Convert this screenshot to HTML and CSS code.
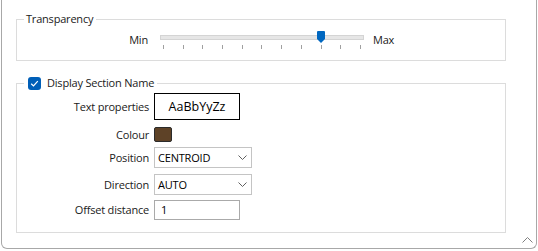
FILE: index.html
```html
<!DOCTYPE html>
<html lang="en">
<head>
    <meta charset="UTF-8">
    <title>Section Name Options</title>
    <link rel="stylesheet" href="styles.css">
</head>
<body>

    <div class="panel">

        <!-- Transparency -->
        <fieldset class="group group-transparency">
            <legend>Transparency</legend>
            <div class="slider-row">
                <span class="slider-label slider-min">Min</span>
                <div class="slider">
                    <div class="track"></div>
                    <svg class="thumb" width="8" height="12" viewBox="0 0 8 12">
                        <path d="M1 0 H7 Q8 0 8 1 V8 L4 12 L0 8 V1 Q0 0 1 0 Z" fill="#0067c0"/>
                    </svg>
                    <div class="ticks">
                        <span></span><span></span><span></span><span></span><span></span><span></span>
                        <span></span><span></span><span></span><span></span><span></span>
                    </div>
                </div>
                <span class="slider-label">Max</span>
            </div>
        </fieldset>

        <!-- Section name -->
        <fieldset class="group group-section">
            <legend>
                <label class="check">
                    <span class="checkbox">
                        <svg width="13" height="13" viewBox="0 0 13 13">
                            <path d="M3.2 6.8 L5.5 9 L9.8 4.2" fill="none" stroke="#fff" stroke-width="1.2"/>
                        </svg>
                    </span>
                    Display Section Name
                </label>
            </legend>
            <div class="form-grid">
                <span class="field-label">Text properties</span>
                <div class="font-box">AaBbYyZz</div>

                <span class="field-label">Colour</span>
                <div class="swatch"></div>

                <span class="field-label">Position</span>
                <div class="select">
                    <span>CENTROID</span>
                    <svg width="9" height="5" viewBox="0 0 9 5"><path d="M0.5 0.5 L4.5 4.5 L8.5 0.5" fill="none" stroke="#606060"/></svg>
                </div>

                <span class="field-label">Direction</span>
                <div class="select">
                    <span>AUTO</span>
                    <svg width="9" height="5" viewBox="0 0 9 5"><path d="M0.5 0.5 L4.5 4.5 L8.5 0.5" fill="none" stroke="#606060"/></svg>
                </div>

                <span class="field-label">Offset distance</span>
                <div class="text-input">1</div>
            </div>
        </fieldset>

        <div class="panel-footer">
            <svg width="11" height="6" viewBox="0 0 11 6"><path d="M0.5 5.5 L5.5 0.5 L10.5 5.5" fill="none" stroke="#808080"/></svg>
        </div>
    </div>

</body>
</html>
```

FILE: styles.css
```css
/* General */
body {
    margin: 0;
    background: #ffffff;
    font-family: 'Open Sans', 'Liberation Sans', sans-serif;
    font-size: 11px;
    letter-spacing: -0.2px;
    color: #1a1a1a;
}

.panel {
    margin-left: 1px;
    width: 536px;
    height: 249px;
    box-sizing: border-box;
    border: 1px solid #a8a8a8;
    border-top: none;
    border-radius: 0 0 6px 6px;
    padding: 11px 30px 0 14px;
    position: relative;
}

/* Group boxes */
.group {
    margin: 0;
    padding: 0;
    border: 1px solid #dcdcdc;
    min-width: 0;
}

.group legend {
    padding: 0 3px 0 2px;
    margin-left: 7px;
    line-height: 16px;
}

.group-transparency {
    height: 50px;
    box-sizing: border-box;
}

.group-section {
    margin-top: 14px;
    height: 158px;
    box-sizing: border-box;
}

.group-section legend {
    padding-left: 4px;
}

/* Slider */
.slider-row {
    display: flex;
    align-items: center;
    margin-top: 4px;
}

.slider-label {
    line-height: 16px;
}

.slider-min {
    width: 131px;
    text-align: right;
}

.slider {
    position: relative;
    width: 204px;
    height: 18px;
    margin: 0 9px 0 12px;
}

.track {
    margin-top: 4px;
    height: 3px;
    background: #e6e6e6;
    border: 1px solid #d4d4d4;
}

.thumb {
    position: absolute;
    left: 157px;
    top: 0;
}

.ticks {
    display: flex;
    justify-content: space-between;
    margin: 5px 3px 0 3px;
}

.ticks span {
    width: 1px;
    height: 4px;
    background: #a0a0a0;
}

/* Checkbox legend */
.check {
    display: flex;
    align-items: center;
    gap: 6px;
}

.checkbox {
    display: block;
    width: 13px;
    height: 13px;
    border-radius: 3px;
    background: #005fb8;
}

.checkbox svg {
    display: block;
}

/* Form */
.form-grid {
    display: grid;
    grid-template-columns: 132px auto;
    grid-template-rows: 33px 22px 25px 28px 23px;
    column-gap: 5px;
    align-items: center;
    justify-items: start;
    margin-top: -1px;
}

.field-label {
    justify-self: end;
}

.font-box {
    width: 86px;
    height: 27px;
    box-sizing: border-box;
    border: 1px solid #000000;
    display: flex;
    align-items: center;
    justify-content: center;
    font-size: 12.5px;
    letter-spacing: 0;
    color: #000000;
}

.swatch {
    width: 18px;
    height: 15px;
    box-sizing: border-box;
    border: 1px solid #2b2b2b;
    border-radius: 2px;
    background: #5e4227;
}

.select {
    width: 98px;
    height: 21px;
    box-sizing: border-box;
    border: 1px solid #c4c4c4;
    display: flex;
    align-items: center;
    justify-content: space-between;
    padding: 0 4px 0 3px;
    color: #000000;
}

.text-input {
    width: 86px;
    height: 20px;
    box-sizing: border-box;
    border: 1px solid #aaaaaa;
    display: flex;
    align-items: center;
    padding-left: 6px;
    color: #000000;
}

/* Footer chevron */
.panel-footer {
    position: absolute;
    right: 3px;
    bottom: 5px;
}

.panel-footer svg {
    display: block;
}
```
